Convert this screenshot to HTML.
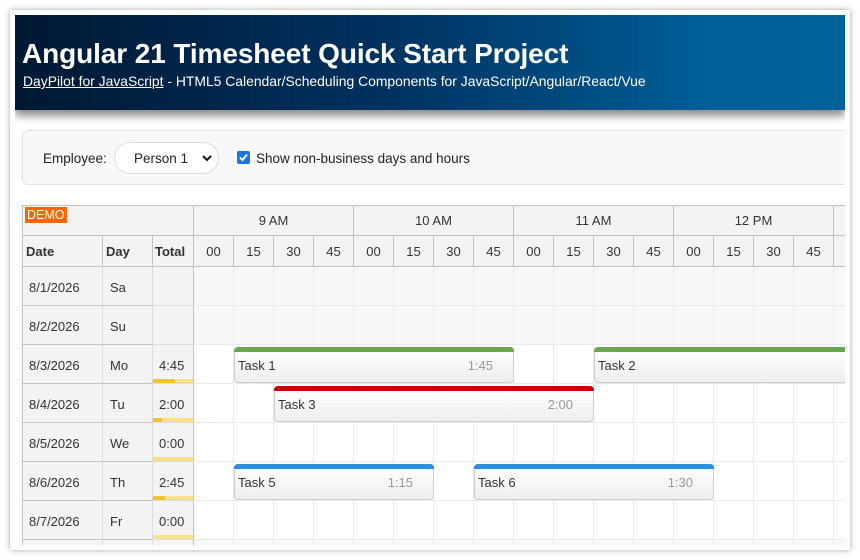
<!DOCTYPE html>
<html><head><meta charset="utf-8"><style>
*{box-sizing:border-box;margin:0;padding:0}
body{width:860px;height:560px;background:#fff;position:relative;overflow:hidden;font-family:"Liberation Sans",sans-serif;color:#333}
.win{position:absolute;left:10px;top:10px;width:840px;height:540px;background:#fff;box-shadow:0 0 6px rgba(0,0,0,.35)}
.clip{position:absolute;left:15px;top:15px;width:830px;height:530px;overflow:hidden;background:#fff}
.hdr{position:absolute;left:0;top:0;width:830px;height:95px;background:linear-gradient(90deg,#001833 0%,#003260 45%,#00609a 85%,#00629c 100%);box-shadow:0 6px 8px rgba(0,0,0,.45);color:#fff}
.hdr h1{position:absolute;left:7px;top:23px;font-size:28px;font-weight:bold;letter-spacing:-.1px}
.hdr .sub{position:absolute;left:8px;top:58px;font-size:13.9px}
.hdr .sub u{text-decoration:underline}
.tb{position:absolute;left:7px;top:115px;width:830px;height:55px;background:#f8f8f8;border:1px solid #e3e3e3;border-radius:6px;font-size:13.5px;color:#222}
.a{position:absolute;white-space:nowrap}
.sel{left:91px;top:11px;width:105px;height:32px;border:1px solid #ddd;border-radius:16px;background:#fff}
.cb{left:214px;top:20px;width:13px;height:13px;background:#1a73e8;border-radius:2px}
.c{position:absolute;font-size:13px;color:#333}
.h{background:#f3f3f3;border-right:1px solid #c3c3c3;border-bottom:1px solid #c3c3c3}
.task{position:absolute;height:36px;background:linear-gradient(#fff,#eee);border:1px solid #ccc;border-radius:4px;font-size:13px;color:#333}
.task .bar{position:absolute;left:-1px;right:-1px;top:-1px;height:5px;border-radius:4px 4px 0 0}
.task .t{position:absolute;left:3px;top:10px}
.task .d{position:absolute;right:20px;top:10px;color:#999}
</style></head><body>
<div class="win"></div>
<div class="clip">
<div class="hdr"><h1>Angular 21 Timesheet Quick Start Project</h1>
<div class="sub"><u>DayPilot for JavaScript</u> - HTML5 Calendar/Scheduling Components for JavaScript/Angular/React/Vue</div></div>
<div class="tb">
<div class="a" style="left:20px;top:20px">Employee:</div>
<div class="a sel"><span class="a" style="left:19px;top:8px">Person 1</span>
<svg class="a" style="left:87px;top:11px" width="10" height="8" viewBox="0 0 10 8"><path d="M1 2 L5 6 L9 2" stroke="#111" stroke-width="2" fill="none"/></svg></div>
<div class="a cb"><svg width="13" height="13" viewBox="0 0 13 13"><path d="M3 6.5 L5.5 9 L10 3.5" stroke="#fff" stroke-width="2" fill="none"/></svg></div>
<div class="a" style="left:233px;top:20px">Show non-business days and hours</div>
</div>
<div style="position:absolute;left:7px;top:190px;width:830px;height:350px;border-left:1px solid #c3c3c3;border-top:1px solid #c3c3c3">
<div class="c h" style="left:0;top:0;width:171px;height:30px"><span class="a" style="left:2px;top:1px;background:#f60;color:#fff;padding:1px 2px;font-size:12.5px">DEMO</span></div>
<div class="c h" style="left:0;top:30px;width:80px;height:31px;font-weight:bold"><span class="a" style="left:3px;top:8px">Date</span></div>
<div class="c h" style="left:80px;top:30px;width:50px;height:31px;font-weight:bold"><span class="a" style="left:3px;top:8px">Day</span></div>
<div class="c h" style="left:130px;top:30px;width:41px;height:31px;font-weight:bold"><span class="a" style="left:2px;top:8px">Total</span></div>
<div id="g"></div>
</div>
</div>
<script>
var g=document.getElementById('g'),h='';
var hrs=['9 AM','10 AM','11 AM','12 PM',''];
for(var i=0;i<5;i++)h+='<div class="c h" style="left:'+(171+i*160)+'px;top:0;width:160px;height:30px;text-align:center;line-height:30px">'+hrs[i]+'</div>';
var m=['00','15','30','45'];
for(var i=0;i<17;i++)h+='<div class="c h" style="left:'+(171+i*40)+'px;top:30px;width:40px;height:31px;text-align:center;line-height:31px">'+m[i%4]+'</div>';
var rows=[['8/1/2026','Sa','',0],['8/2/2026','Su','',0],['8/3/2026','Mo','4:45',22],['8/4/2026','Tu','2:00',9],['8/5/2026','We','0:00',0],['8/6/2026','Th','2:45',12],['8/7/2026','Fr','0:00',0],['','','',-1]];
for(var r=0;r<8;r++){var y=61+r*39,R=rows[r],we=r<2||r==7;
h+='<div class="c h" style="left:0;top:'+y+'px;width:80px;height:39px;border-right-color:#ddd"><span class="a" style="left:6px;top:13px">'+R[0]+'</span></div>';
h+='<div class="c h" style="left:80px;top:'+y+'px;width:50px;height:39px;border-right-color:#ddd"><span class="a" style="left:7px;top:13px">'+R[1]+'</span></div>';
h+='<div class="c h" style="left:130px;top:'+y+'px;width:41px;height:39px;border-bottom-color:#ddd"><span class="a" style="left:6px;top:13px">'+R[2]+'</span>'+(R[2]?'<div class="a" style="left:0;right:0;bottom:0;height:4px;background:#ffe08a"><div style="width:'+R[3]+'px;height:4px;background:#f1c232"></div></div>':'')+'</div>';
for(var i=0;i<17;i++)h+='<div class="c" style="left:'+(171+i*40)+'px;top:'+y+'px;width:40px;height:39px;border-right:1px solid #ebebeb;border-bottom:1px solid #ebebeb;background:'+(we?'#f8f8f8':'#fff')+'"></div>';}
var T=[[2,1,7,'#6aa84f','Task 1','1:45'],[2,10,7,'#6aa84f','Task 2',''],[3,2,8,'#cc0000','Task 3','2:00'],[5,1,5,'#2b8fe0','Task 5','1:15'],[5,7,6,'#2b8fe0','Task 6','1:30']];
for(var k=0;k<T.length;k++){var t=T[k];h+='<div class="task" style="left:'+(171+t[1]*40)+'px;top:'+(61+t[0]*39+2)+'px;width:'+(t[2]*40)+'px"><div class="bar" style="background:'+t[3]+'"></div><span class="t">'+t[4]+'</span><span class="d">'+t[5]+'</span></div>';}
g.innerHTML=h;
</script>
</body></html>
